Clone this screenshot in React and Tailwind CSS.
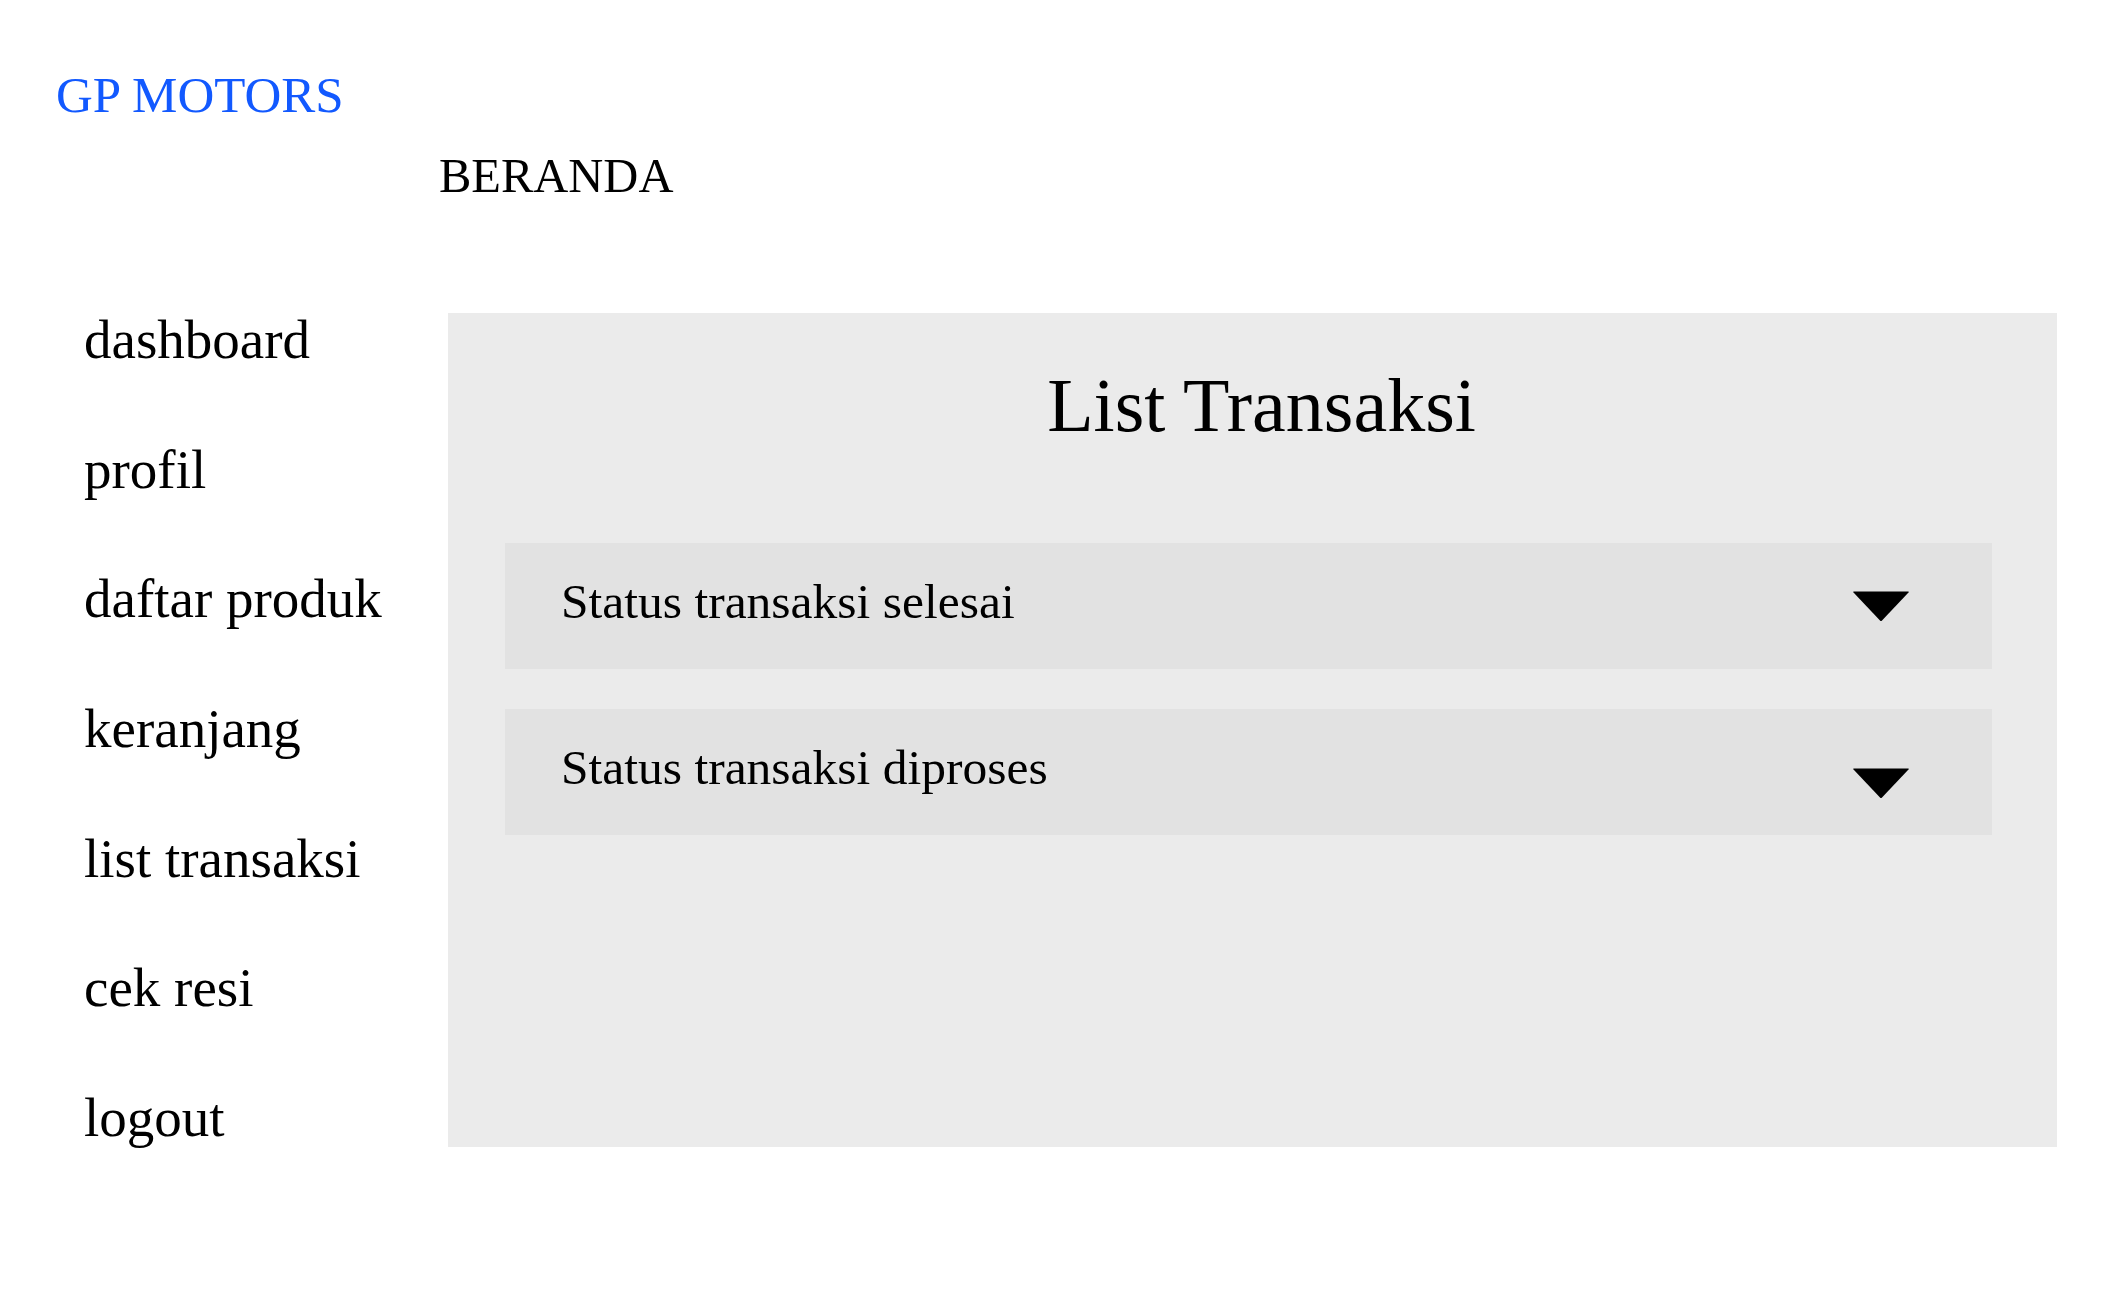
import React from "react";

function Arrow({ className = "" }) {
  return (
    <svg
      width="58"
      height="32"
      viewBox="0 0 58 32"
      className={className}
      aria-hidden="true"
    >
      <path d="M2 1.5 L56 1.5 Q57.5 1.5 56.5 2.6 L30 30.5 Q29 31.5 28 30.5 L1.5 2.6 Q0.5 1.5 2 1.5 Z" fill="#000" />
    </svg>
  );
}

function StatusRow({ label, arrowClass = "" }) {
  return (
    <div className="flex h-[126px] w-[1487px] items-center justify-between bg-[#e2e2e2] pl-[56px] pr-[82px]">
      <span className="-translate-y-[4px] text-[49.5px] leading-[50px] text-black">
        {label}
      </span>
      <Arrow className={arrowClass} />
    </div>
  );
}

export default function App() {
  const menu = [
    "dashboard",
    "profil",
    "daftar produk",
    "keranjang",
    "list transaksi",
    "cek resi",
    "logout",
  ];
  return (
    <div
      className="min-h-[1302px] w-[2114px] bg-white text-black"
      style={{ fontFamily: '"Liberation Serif", "Times New Roman", serif' }}
    >
      <header className="pt-[70px]">
        <div className="pl-[56px] text-[51px] leading-[50px] text-[#1259ff]">
          GP MOTORS
        </div>
        <div className="mt-[32px] pl-[439px] text-[48.5px] leading-[48px]">
          BERANDA
        </div>
      </header>

      <div className="mt-[111px] flex">
        <nav className="flex w-[448px] flex-col gap-[74.7px] pl-[84px] pt-[1px]">
          {menu.map((m) => (
            <div key={m} className="text-[55px] leading-[55px]">
              {m}
            </div>
          ))}
        </nav>

        <main className="mt-[2px] h-[834px] w-[1609px] bg-[#ebebeb] pt-[54px]">
          <h1 className="pl-[18px] text-center text-[76px] font-normal leading-[76px]">
            List Transaksi
          </h1>
          <div className="mt-[100px] flex flex-col gap-[40px] pl-[57px]">
            <StatusRow label="Status transaksi selesai" />
            <StatusRow
              label="Status transaksi diproses"
              arrowClass="translate-y-[11px]"
            />
          </div>
        </main>
      </div>
    </div>
  );
}
